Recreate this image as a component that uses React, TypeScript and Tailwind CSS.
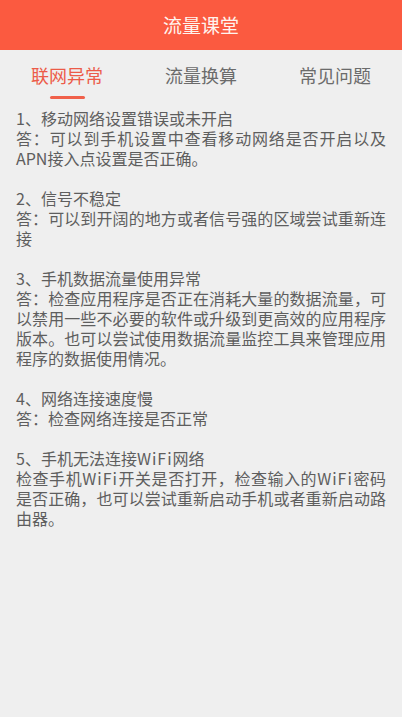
import type { JSX, ReactNode } from "react";

const tabs = ["联网异常", "流量换算", "常见问题"];

// the Latin word is a little wider in the reference, spaced out a touch
const WiFi = () => <span className="tracking-[1px]">WiFi</span>;

const faqs: { q: ReactNode; a: ReactNode }[] = [
  {
    q: "1、移动网络设置错误或未开启",
    a: "答：可以到手机设置中查看移动网络是否开启以及APN接入点设置是否正确。",
  },
  {
    q: "2、信号不稳定",
    a: "答：可以到开阔的地方或者信号强的区域尝试重新连接",
  },
  {
    q: "3、手机数据流量使用异常",
    a: "答：检查应用程序是否正在消耗大量的数据流量，可以禁用一些不必要的软件或升级到更高效的应用程序版本。也可以尝试使用数据流量监控工具来管理应用程序的数据使用情况。",
  },
  {
    q: "4、网络连接速度慢",
    a: "答：检查网络连接是否正常",
  },
  {
    q: (
      <>
        5、手机无法连接<WiFi />网络
      </>
    ),
    a: (
      <>
        检查手机<WiFi />开关是否打开，检查输入的<WiFi />
        密码是否正确，也可以尝试重新启动手机或者重新启动路由器。
      </>
    ),
  },
];

export default function App(): JSX.Element {
  return (
    <div className="min-h-[717px] w-full bg-[#efefef] font-['Noto_Sans_CJK_SC',sans-serif]">
      {/* Header */}
      <header className="flex h-[50px] items-center justify-center bg-[#fb5a40]">
        <h1 className="text-[19px] text-[#fff4ee]">流量课堂</h1>
      </header>

      {/* Tabs */}
      <nav className="grid h-[54px] grid-cols-3">
        {tabs.map((t, i) => (
          <div key={t} className="relative flex items-center justify-center pb-[4px]">
            <span
              className={
                i === 0
                  ? "text-[18px] text-[#ec5b48]"
                  : "text-[18px] text-[#6b6b6b]"
              }
            >
              {t}
            </span>
            {i === 0 && (
              <span className="absolute bottom-[5px] h-[3px] w-[35px] rounded-full bg-[#f0604a]" />
            )}
          </div>
        ))}
      </nav>

      {/* Content */}
      <main className="flex flex-col gap-5 px-4 pt-[4px] text-justify text-[16px] leading-5 text-[#5e5e5e]">
        {faqs.map((f, i) => (
          <div key={i}>
            <p>{f.q}</p>
            <p>{f.a}</p>
          </div>
        ))}
      </main>
    </div>
  );
}
